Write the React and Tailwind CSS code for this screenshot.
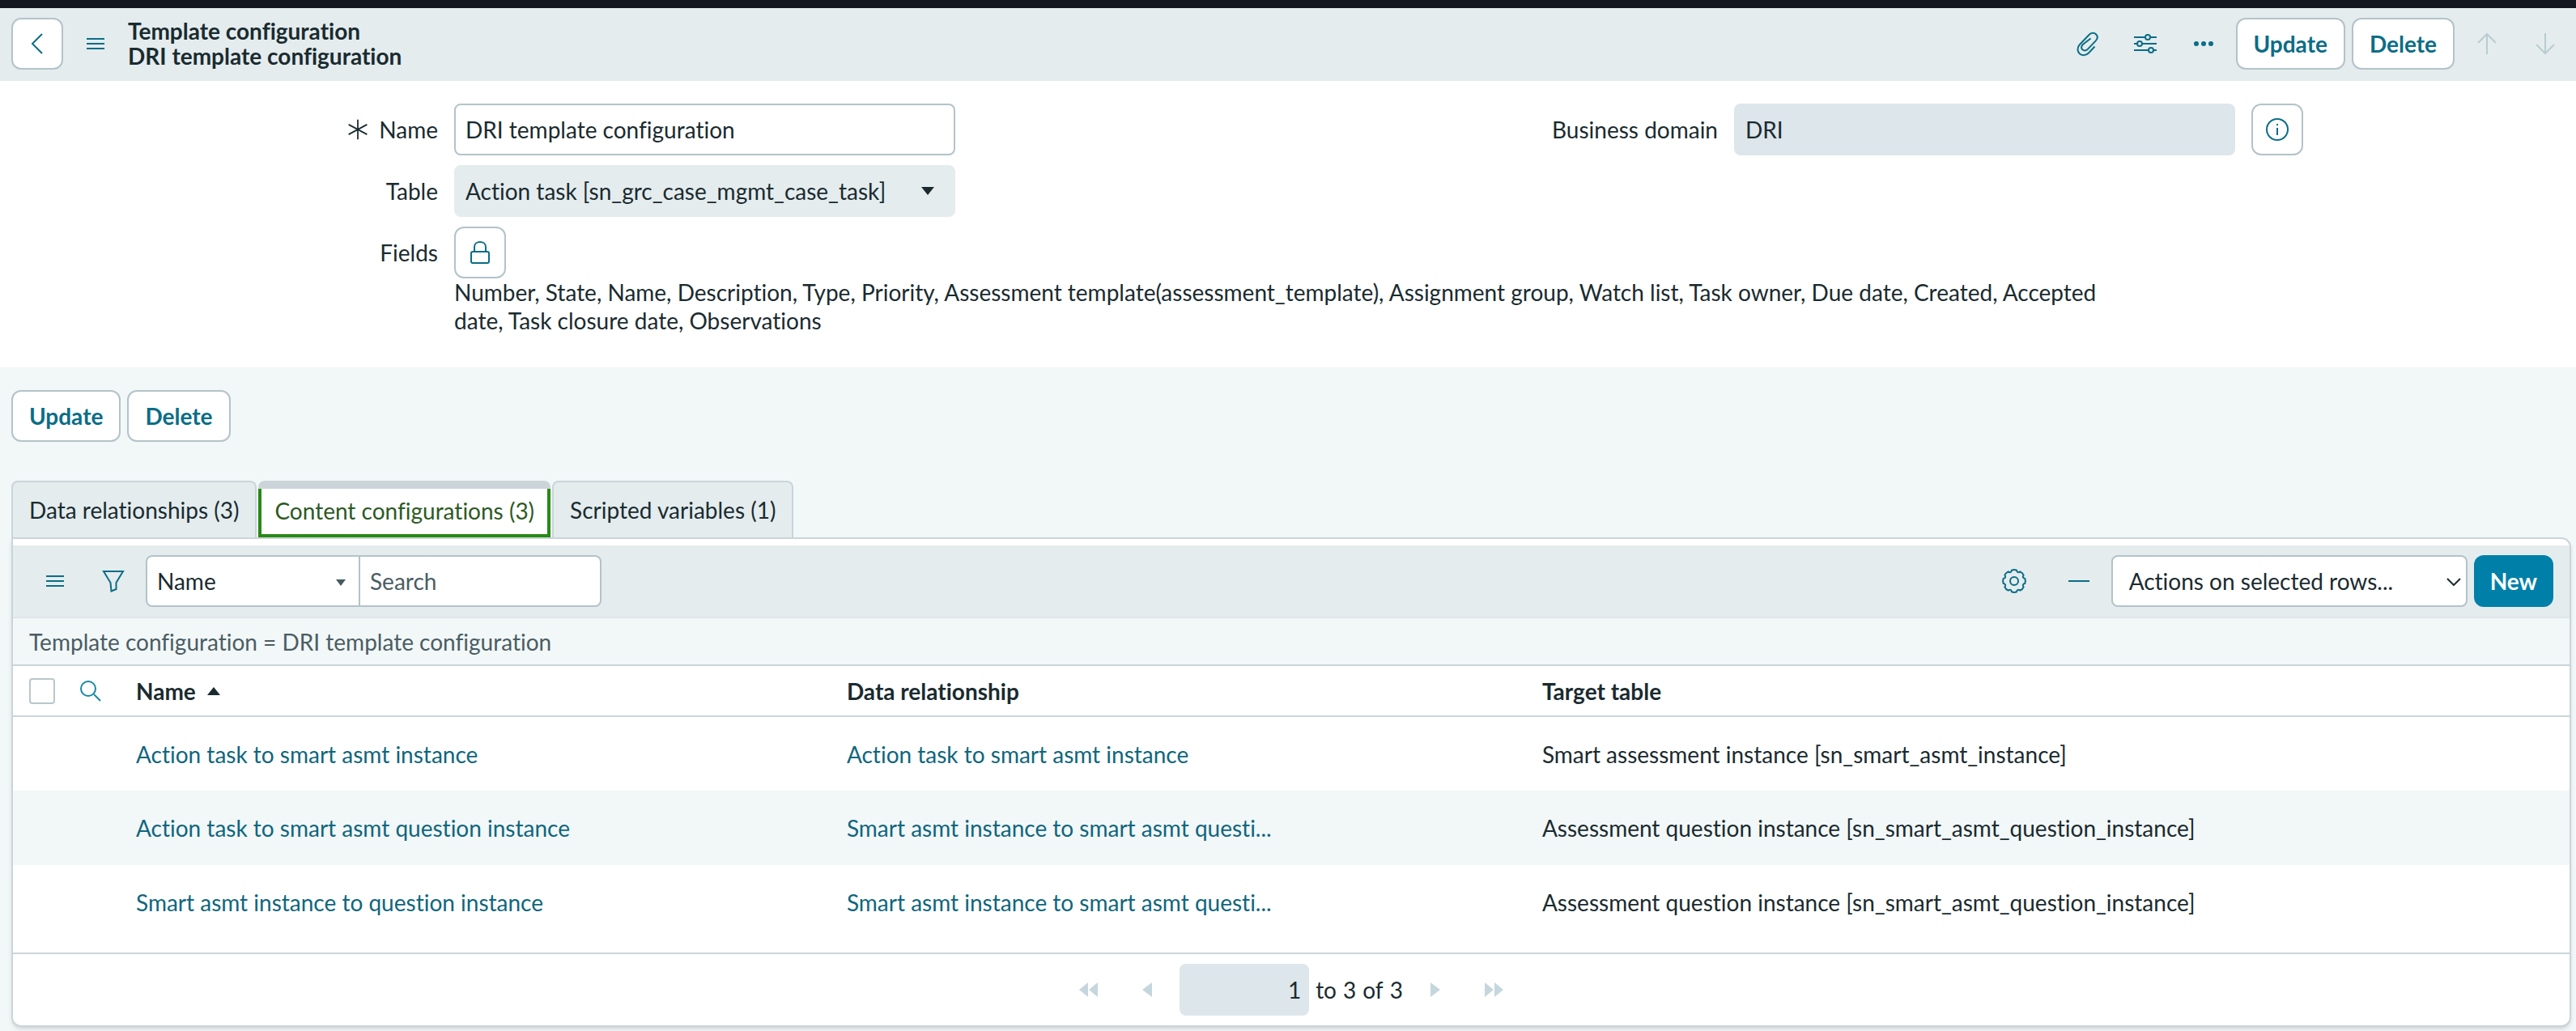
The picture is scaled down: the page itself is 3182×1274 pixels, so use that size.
import { useState } from "react";

const tabs = ["Data relationships (3)", "Content configurations (3)", "Scripted variables (1)"];

const rows = [
  {
    name: "Action task to smart asmt instance",
    relationship: "Action task to smart asmt instance",
    target: "Smart assessment instance [sn_smart_asmt_instance]",
  },
  {
    name: "Action task to smart asmt question instance",
    relationship: "Smart asmt instance to smart asmt questi...",
    target: "Assessment question instance [sn_smart_asmt_question_instance]",
  },
  {
    name: "Smart asmt instance to question instance",
    relationship: "Smart asmt instance to smart asmt questi...",
    target: "Assessment question instance [sn_smart_asmt_question_instance]",
  },
];

const Icon = ({ children, className = "size-8" }) => (
  <svg
    viewBox="0 0 32 32"
    fill="none"
    stroke="currentColor"
    strokeWidth="2"
    className={className}
    aria-hidden="true"
  >
    {children}
  </svg>
);

const MenuIcon = () => (
  <Icon>
    <path d="M5 10h22M5 16h22M5 22h22" />
  </Icon>
);

const Button = ({ children }) => (
  <button className="h-16 rounded-xl border-2 border-[#b3c3c9] bg-white px-5 font-bold text-[#0b6d86]">
    {children}
  </button>
);

const IconButton = ({ label, children, disabled }) => (
  <button
    aria-label={label}
    disabled={disabled}
    className="flex h-16 w-[72px] items-center justify-center text-[#0b6d86] disabled:text-[#b9ccd2]"
  >
    {children}
  </button>
);

const BoxButton = ({ label, children }) => (
  <button
    aria-label={label}
    className="flex size-16 shrink-0 items-center justify-center rounded-xl border-2 border-[#b3c3c9] bg-white text-[#0b6d86]"
  >
    {children}
  </button>
);

function Header() {
  return (
    <header className="flex h-[100px] items-center border-t-10 border-[#151720] bg-[#e4ecee] pr-[2px] pb-[2px] pl-[14px]">
      <BoxButton label="Back">
        <Icon>
          <path d="M22 4 10 16l12 12" />
        </Icon>
      </BoxButton>
      <button aria-label="Form menu" className="ml-6 text-[#0b6d86]">
        <MenuIcon />
      </button>
      <h1 className="ml-6 font-bold leading-[31px]">
        <span className="block">Template configuration</span>
        <span className="block">DRI template configuration</span>
      </h1>
      <div className="ml-auto flex items-center">
        <IconButton label="Attachments">
          <Icon>
            <path d="M25.5 19.5 18 27.5C14 31.5 9 30.5 6.5 28S3.5 20.5 7 17L18.5 5C21 2.2 25 2.2 27.2 4.5S29 10 26.8 12.4L17 22.6C15 24.8 12.2 25 10.3 23.2S9 19 10.8 17L20.5 9.5" />
          </Icon>
        </IconButton>
        <IconButton label="Personalize form">
          <Icon>
            <path d="M2 8h14m6 0h8M2 16h4m6 0h18M2 24h18m6 0h4" />
            <circle cx="19" cy="8" r="3" />
            <circle cx="9" cy="16" r="3" />
            <circle cx="23" cy="24" r="3" />
          </Icon>
        </IconButton>
        <IconButton label="More options">
          <Icon>
            <g fill="currentColor" stroke="none">
              <circle cx="7" cy="16" r="3" />
              <circle cx="16" cy="16" r="3" />
              <circle cx="25" cy="16" r="3" />
            </g>
          </Icon>
        </IconButton>
        <div className="mr-1 ml-1 flex gap-2">
          <Button>Update</Button>
          <Button>Delete</Button>
        </div>
        <IconButton label="Previous record" disabled>
          <Icon>
            <path d="M16 29V4M5 15 16 4l11 11" />
          </Icon>
        </IconButton>
        <IconButton label="Next record" disabled>
          <Icon>
            <path d="M16 3v25M5 17l11 11 11-11" />
          </Icon>
        </IconButton>
      </div>
    </header>
  );
}

function RecordForm() {
  return (
    <form className="bg-white px-[10px] pt-7 pb-10" onSubmit={(e) => e.preventDefault()}>
      <div className="grid grid-cols-2">
        <div className="grid grid-cols-[551fr_619fr_411fr] items-center gap-y-3">
          <label htmlFor="name" className="flex items-center justify-end gap-3 pr-5">
            <Icon className="size-7">
              <path d="M16 2v28M3 9l26 14M3 23 29 9" />
            </Icon>
            Name
          </label>
          <input
            id="name"
            defaultValue="DRI template configuration"
            className="h-16 min-w-0 rounded-lg border-2 border-[#b3c3c9] bg-white px-3"
          />
          <span />
          <label htmlFor="table" className="pr-5 text-right">
            Table
          </label>
          <div className="relative">
            <select id="table" className="h-16 w-full appearance-none rounded-lg bg-[#e4ecee] px-[14px]">
              <option>Action task [sn_grc_case_mgmt_case_task]</option>
            </select>
            <svg viewBox="0 0 16 10" className="pointer-events-none absolute top-[27px] right-[26px] h-[10px] w-4" aria-hidden="true">
              <path d="M0 0h16L8 10z" fill="#1a2b2f" />
            </svg>
          </div>
          <span />
        </div>
        <div className="grid grid-cols-[551fr_619fr_411fr] items-start">
          <label htmlFor="domain" className="flex h-16 items-center justify-end pr-5">
            Business domain
          </label>
          <input id="domain" readOnly value="DRI" className="h-16 min-w-0 rounded-lg bg-[#dde6eb] px-[14px]" />
          <div className="pl-5">
            <BoxButton label="Preview record">
              <Icon>
                <circle cx="16" cy="16" r="13" />
                <path d="M16 14v9M16 9v2" />
              </Icon>
            </BoxButton>
          </div>
        </div>
      </div>
      <div className="mt-3 grid grid-cols-[551fr_2611fr]">
        <span className="flex h-16 items-center justify-end pr-5">Fields</span>
        <div>
          <BoxButton label="Unlock fields">
            <Icon>
              <rect x="5" y="15" width="22" height="14" rx="2" />
              <path d="M9 15V9c0-8 14-8 14 0v6" />
            </Icon>
          </BoxButton>
          <p className="w-[78%] leading-[35px]">
            Number, State, Name, Description, Type, Priority, Assessment template(assessment_template), Assignment
            group, Watch list, Task owner, Due date, Created, Accepted date, Task closure date, Observations
          </p>
        </div>
      </div>
    </form>
  );
}

function Toolbar() {
  return (
    <div className="mt-2 flex h-[90px] items-center border-b-2 border-[#dfe7ea] bg-[#e4ecee] pr-5 pl-4 text-[#0b6d86]">
      <button aria-label="List menu" className="flex w-[72px] justify-center">
        <MenuIcon />
      </button>
      <button aria-label="Filter" className="flex w-[72px] justify-center">
        <Icon>
          <path d="M4 4h24L19.5 18v8l-6 2.5L12.500 18z" />
        </Icon>
      </button>
      <div className="ml-1 flex text-[#1a2b2f]">
        <div className="relative">
          <select
            aria-label="Search column"
            className="h-16 w-[265px] appearance-none rounded-l-lg border-2 border-[#b3c3c9] bg-white px-3"
          >
            <option>Name</option>
          </select>
          <svg viewBox="0 0 12 8" className="pointer-events-none absolute top-[30px] right-[18px] h-2 w-3" aria-hidden="true">
            <path d="M0 0h12L6 8z" fill="#485b61" />
          </svg>
        </div>
        <input
          aria-label="Search"
          placeholder="Search"
          className="h-16 w-[298px] rounded-r-lg border-2 border-l-0 border-[#b3c3c9] bg-white px-3 placeholder:text-[#4a5d63]"
        />
      </div>
      <div className="ml-auto flex items-center">
        <button aria-label="List settings" className="flex w-20 justify-center">
          <Icon>
            <circle cx="16" cy="16" r="5" />
            <path d="M12.900 2.700Q16 1.500 19.100 2.700 19.900 6.600 23.300 4.400 26.400 5.600 27.600 8.700 25.400 12.100 29.300 12.900 30.500 16 29.300 19.100 25.400 19.900 27.600 23.300 26.400 26.400 23.300 27.600 19.900 25.400 19.100 29.300 16 30.500 12.900 29.300 12.100 25.400 8.700 27.600 5.600 26.400 4.400 23.300 6.600 19.900 2.700 19.100 1.500 16 2.700 12.900 6.600 12.100 4.400 8.700 5.600 5.600 8.700 4.400 12.100 6.600 12.900 2.700z" />
          </Icon>
        </button>
        <button aria-label="Collapse list" className="flex w-20 justify-center">
          <Icon>
            <path d="M3 16h26" />
          </Icon>
        </button>
        <div className="relative text-[#1a2b2f]">
          <select
            aria-label="Actions on selected rows"
            className="h-16 w-[440px] appearance-none rounded-lg border-2 border-[#b3c3c9] bg-white px-5"
          >
            <option>Actions on selected rows...</option>
          </select>
          <svg viewBox="0 0 18 10" className="pointer-events-none absolute top-7 right-2 h-[10px] w-[18px]" aria-hidden="true">
            <path d="m1 1 8 8 8-8" fill="none" stroke="currentColor" strokeWidth="2" />
          </svg>
        </div>
        <button className="ml-2 h-16 rounded-xl bg-[#0080a8] px-5 font-bold text-white">New</button>
      </div>
    </div>
  );
}

function RecordTable() {
  return (
    <table className="w-full table-fixed text-left">
      <thead>
        <tr className="h-[62px] border-b-2 border-[#cbd5d9]">
          <th className="w-[136px] pl-5">
            <div className="flex items-center gap-7">
              <input
                type="checkbox"
                aria-label="Select all rows"
                className="size-8 appearance-none rounded-sm border-2 border-[#b9c6cc] bg-white"
              />
              <button aria-label="Search columns" className="text-[#1787a3]">
                <Icon>
                  <circle cx="13" cy="13" r="9" />
                  <path d="m20 20 8 8" />
                </Icon>
              </button>
            </div>
          </th>
          <th className="w-[27.8%] px-4">
            <span className="flex items-center gap-[14px]">
              Name
              <svg viewBox="0 0 16 10" className="h-[10px] w-4" aria-hidden="true">
                <path d="M0 10h16L8 0z" fill="#1a2b2f" />
              </svg>
            </span>
          </th>
          <th className="w-[27.2%] px-4">Data relationship</th>
          <th className="px-4">Target table</th>
        </tr>
      </thead>
      <tbody>
        {rows.map((row, index) => (
          <tr key={index} className="h-[92px] even:bg-[#f2f7f8]">
            <td />
            <td className="px-4">
              <a href="#" className="text-[#0f667d]">{row.name}</a>
            </td>
            <td className="px-4">
              <a href="#" className="text-[#0f667d]">{row.relationship}</a>
            </td>
            <td className="px-4">{row.target}</td>
          </tr>
        ))}
      </tbody>
    </table>
  );
}

const PageButton = ({ label, children }) => (
  <button aria-label={label} disabled className="flex w-[72px] justify-center text-[#c5d7dc]">
    <svg viewBox="0 0 24 18" fill="currentColor" className="h-[18px] w-6" aria-hidden="true">
      {children}
    </svg>
  </button>
);

function Pagination() {
  return (
    <div className="mt-4 flex h-[90px] items-center justify-center border-t-2 border-[#cbd5d9]">
      <PageButton label="First page">
        <path d="M11 0v18L0 9zM23 0v18L12 9z" />
      </PageButton>
      <PageButton label="Previous page">
        <path d="M18 0v18L6 9z" />
      </PageButton>
      <label className="mx-1 flex items-center gap-2">
        <input
          aria-label="Skip to row"
          readOnly
          value="1"
          className="h-16 w-40 rounded-lg bg-[#dde6eb] px-[10px] text-right"
        />
        <span>to</span>
        <span>3</span>
        <span>of</span>
        <span>3</span>
      </label>
      <PageButton label="Next page">
        <path d="M6 0v18l12-9z" />
      </PageButton>
      <PageButton label="Last page">
        <path d="M1 0v18l11-9zM13 0v18l11-9z" />
      </PageButton>
    </div>
  );
}

export default function App() {
  const [activeTab, setActiveTab] = useState(1);

  return (
    <div className="min-h-screen bg-[#f2f7f8] font-['Lato',sans-serif] text-[28px] leading-9 text-[#1a2b2f] [font-variant-ligatures:no-common-ligatures]">
      <Header />
      <RecordForm />

      <div className="flex gap-2 px-[14px] pt-7">
        <Button>Update</Button>
        <Button>Delete</Button>
      </div>

      <div className="mt-12 pr-[6px] pb-1 pl-[14px]">
        <div role="tablist" className="flex gap-[2px]">
          {tabs.map((tab, index) => (
            <button
              key={tab}
              role="tab"
              aria-selected={index === activeTab}
              onClick={() => setActiveTab(index)}
              className={
                index === activeTab
                  ? "h-[70px] rounded-t-lg border-t-10 border-[#cbd5d9] bg-white text-[#2c5a24]"
                  : "h-[70px] rounded-t-lg border-2 border-b-0 border-[#cbd5d9] bg-[#e4ecee] px-5"
              }
            >
              {index === activeTab ? (
                <span className="flex h-[60px] items-center border-4 border-t-0 border-[#278a16] px-4 pb-[2px]">
                  {tab}
                </span>
              ) : (
                tab
              )}
            </button>
          ))}
        </div>
        <section className="rounded-tr-xl rounded-b-xl border-2 border-[#cbd5d9] bg-white shadow-md">
          <Toolbar />
          <div className="flex h-[59px] items-center border-b-2 border-[#cbd5d9] bg-[#f2f7f8] px-5 text-[#4a5d63]">
            Template configuration = DRI template configuration
          </div>
          <RecordTable />
          <Pagination />
        </section>
      </div>
    </div>
  );
}
